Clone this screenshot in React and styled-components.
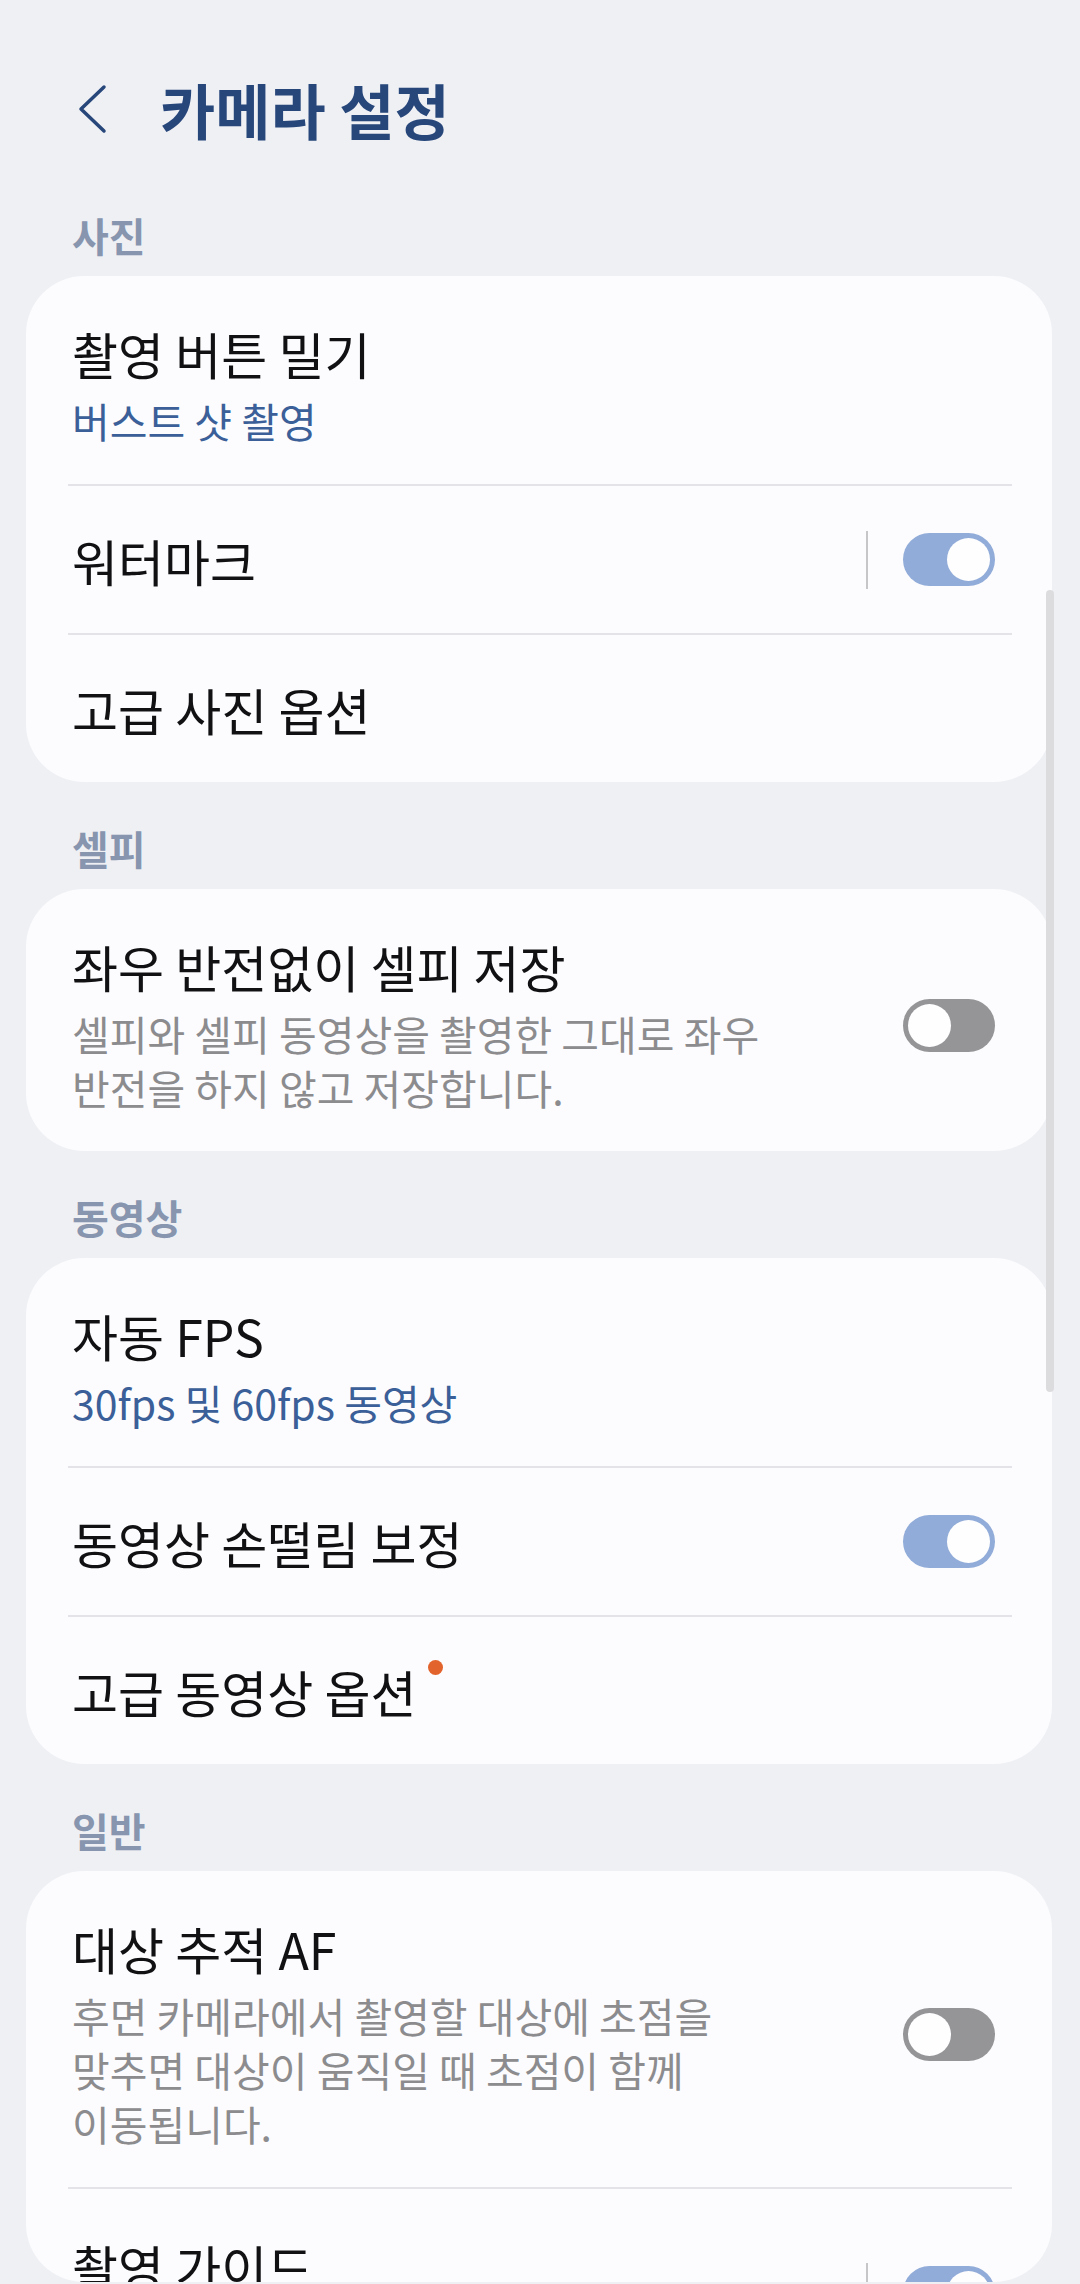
import styled, {createGlobalStyle} from "styled-components";

const GlobalStyle = createGlobalStyle`
  body {
    margin: 0;
    background: #eff0f4;
    font-family: "Noto Sans CJK KR", "Noto Sans", sans-serif;
  }
`;

const Page = styled.div`
  position: relative;
  width: 1080px;
  height: 2284px;
  overflow: hidden;
  box-sizing: border-box;
  padding: 0 28px 0 26px;
  background: #eff0f4;
  word-break: keep-all;
`;

const AppBar = styled.header`
  display: flex;
  align-items: center;
  padding: 69px 0 20px 52px;
  height: 80px;
`;

const BackButton = styled.svg`
  width: 30px;
  height: 50px;
  margin-right: 52px;
  flex-shrink: 0;
`;

const Title = styled.h1`
  margin: 0;
  font-size: 60px;
  line-height: 80px;
  font-weight: 700;
  color: #27467a;
`;

const SectionHeader = styled.h2`
  margin: 41px 0 16px;
  padding-left: 46px;
  font-size: 40px;
  line-height: 50px;
  font-weight: 700;
  color: #8795af;
`;

const Card = styled.section`
  background: #fcfcfe;
  border-radius: 58px;
  overflow: hidden;
  max-height: ${p => p.$maxHeight ? `${p.$maxHeight}px` : "none"};
`;

const Row = styled.div`
  display: flex;
  align-items: center;
  box-sizing: border-box;
  min-height: ${p => p.$minHeight || 147}px;
  padding: ${p => p.$multi ? "47px 46px 37px" : "0 46px"};
`;

const TextCol = styled.div`
  flex: 1;
  min-width: 0;
  align-self: ${p => p.$top ? "flex-start" : "auto"};
`;

const RowTitle = styled.div`
  font-size: 50px;
  line-height: 60px;
  color: #111114;
`;

const Secondary = styled.div`
  margin-top: 10px;
  max-width: 730px;
  font-size: 41px;
  line-height: 54px;
  color: ${p => p.$accent ? "#3b5f98" : "#8c8c8f"};
`;

const Divider = styled.div`
  height: 2px;
  margin: 0 40px 0 42px;
  background: #e4e4e8;
`;

const Separator = styled.div`
  width: 2px;
  height: 58px;
  margin-right: 35px;
  background: #c6c6c9;
  flex-shrink: 0;
`;

const Toggle = styled.div`
  position: relative;
  width: 92px;
  height: 53px;
  margin-right: 11px;
  border-radius: 27px;
  flex-shrink: 0;
  background: ${p => p.$on ? "#91acd8" : "#959598"};

  &::after {
    content: "";
    position: absolute;
    top: 5px;
    left: ${p => p.$on ? "44px" : "5px"};
    width: 43px;
    height: 43px;
    border-radius: 50%;
    background: #fefeff;
  }
`;

const NewDot = styled.span`
  display: inline-block;
  position: relative;
  top: -1px;
  width: 15px;
  height: 15px;
  margin-left: 12px;
  vertical-align: top;
  border-radius: 50%;
  background: #e2632b;
`;

const ScrollBar = styled.div`
  position: absolute;
  left: 1046px;
  top: 590px;
  width: 8px;
  height: 802px;
  border-radius: 4px;
  background: #dcdcdf;
`;

const App = () => {
    return (
        <>
            <GlobalStyle/>
            <Page>
                <AppBar>
                    <BackButton viewBox="0 0 30 50">
                        <path d="M26 3 L3 25 L26 47" fill="none" stroke="#27467a"
                              strokeWidth="3.5" strokeLinecap="round" strokeLinejoin="round"/>
                    </BackButton>
                    <Title>카메라 설정</Title>
                </AppBar>

                <SectionHeader>사진</SectionHeader>
                <Card>
                    <Row $multi>
                        <TextCol>
                            <RowTitle>촬영 버튼 밀기</RowTitle>
                            <Secondary $accent>버스트 샷 촬영</Secondary>
                        </TextCol>
                    </Row>
                    <Divider/>
                    <Row>
                        <TextCol>
                            <RowTitle>워터마크</RowTitle>
                        </TextCol>
                        <Separator/>
                        <Toggle $on/>
                    </Row>
                    <Divider/>
                    <Row>
                        <TextCol>
                            <RowTitle>고급 사진 옵션</RowTitle>
                        </TextCol>
                    </Row>
                </Card>

                <SectionHeader>셀피</SectionHeader>
                <Card>
                    <Row $multi>
                        <TextCol>
                            <RowTitle>좌우 반전없이 셀피 저장</RowTitle>
                            <Secondary>셀피와 셀피 동영상을 촬영한 그대로 좌우 반전을 하지 않고 저장합니다.</Secondary>
                        </TextCol>
                        <Toggle/>
                    </Row>
                </Card>

                <SectionHeader>동영상</SectionHeader>
                <Card>
                    <Row $multi>
                        <TextCol>
                            <RowTitle>자동 FPS</RowTitle>
                            <Secondary $accent>30fps 및 60fps 동영상</Secondary>
                        </TextCol>
                    </Row>
                    <Divider/>
                    <Row>
                        <TextCol>
                            <RowTitle>동영상 손떨림 보정</RowTitle>
                        </TextCol>
                        <Toggle $on/>
                    </Row>
                    <Divider/>
                    <Row>
                        <TextCol>
                            <RowTitle>고급 동영상 옵션<NewDot/></RowTitle>
                        </TextCol>
                    </Row>
                </Card>

                <SectionHeader>일반</SectionHeader>
                <Card $maxHeight={411}>
                    <Row $multi>
                        <TextCol>
                            <RowTitle>대상 추적 AF</RowTitle>
                            <Secondary>후면 카메라에서 촬영할 대상에 초점을 맞추면 대상이 움직일 때 초점이 함께 이동됩니다.</Secondary>
                        </TextCol>
                        <Toggle/>
                    </Row>
                    <Divider/>
                    <Row $multi $minHeight={196}>
                        <TextCol $top>
                            <RowTitle>촬영 가이드</RowTitle>
                        </TextCol>
                        <Separator/>
                        <Toggle $on/>
                    </Row>
                </Card>

                <ScrollBar/>
            </Page>
        </>
    );
};

export default App;
